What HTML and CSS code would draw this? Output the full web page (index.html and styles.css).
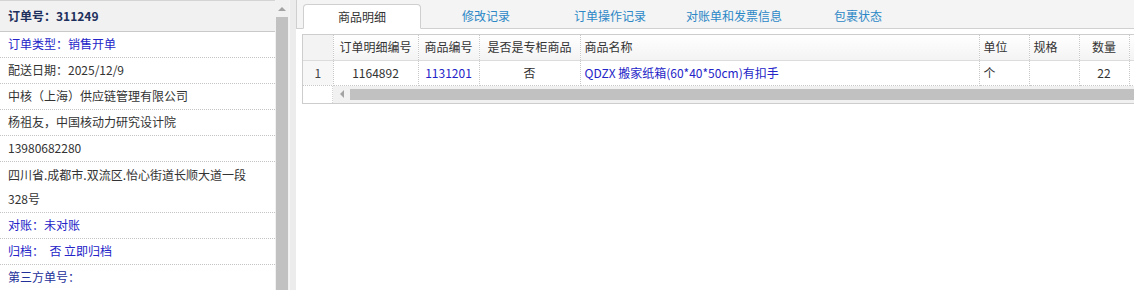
FILE: index.html
```html
<!DOCTYPE html>
<html lang="zh-CN">
<head>
<meta charset="utf-8">
<title>订单详情</title>
<link rel="stylesheet" href="styles.css">
</head>
<body>
<div class="page">
  <aside class="side">
    <div class="side-list">
      <div class="side-head">订单号：311249</div>
      <div class="row blue">订单类型：销售开单</div>
      <div class="row">配送日期：2025/12/9</div>
      <div class="row">中核（上海）供应链管理有限公司</div>
      <div class="row">杨祖友，中国核动力研究设计院</div>
      <div class="row">13980682280</div>
      <div class="row wrap">四川省.成都市.双流区.怡心街道长顺大道一段<br>328号</div>
      <div class="row blue">对账：未对账</div>
      <div class="row blue">归档：&nbsp; 否 立即归档</div>
      <div class="row blue dark">第三方单号：</div>
    </div>
    <div class="vscroll">
      <div class="vs-arrow"></div>
      <div class="vs-thumb"></div>
    </div>
  </aside>
  <div class="splitter"></div>
  <main class="main">
    <div class="tabs">
      <div class="tab active">商品明细</div>
      <div class="tab">修改记录</div>
      <div class="tab">订单操作记录</div>
      <div class="tab">对账单和发票信息</div>
      <div class="tab">包裹状态</div>
    </div>
    <div class="panel">
      <div class="grid">
        <table class="tbl">
          <colgroup>
            <col class="c-num"><col class="c-id"><col class="c-code"><col class="c-flag"><col class="c-name"><col class="c-unit"><col class="c-spec"><col class="c-qty"><col class="c-more">
          </colgroup>
          <thead>
            <tr>
              <th class="num"></th>
              <th>订单明细编号</th>
              <th>商品编号</th>
              <th>是否是专柜商品</th>
              <th class="left">商品名称</th>
              <th class="left">单位</th>
              <th class="left">规格</th>
              <th>数量</th>
              <th></th>
            </tr>
          </thead>
          <tbody>
            <tr>
              <td class="num">1</td>
              <td>1164892</td>
              <td class="link">1131201</td>
              <td>否</td>
              <td class="left link">QDZX 搬家纸箱(60*40*50cm)有扣手</td>
              <td class="left">个</td>
              <td class="left"></td>
              <td>22</td>
              <td></td>
            </tr>
          </tbody>
        </table>
        <div class="hs-row">
          <div class="hs-corner"></div>
          <div class="hscroll">
            <div class="hs-arrow"></div>
            <div class="hs-thumb"></div>
          </div>
        </div>
      </div>
    </div>
  </main>
</div>
</body>
</html>
```

FILE: styles.css
```css
* { box-sizing: border-box; }

html, body {
  margin: 0;
  padding: 0;
  background: #fff;
}

body {
  font-family: "Noto Sans CJK SC", "Microsoft YaHei", sans-serif;
  font-size: 12px;
  color: #333;
}

.page {
  display: flex;
  width: 1134px;
  height: 290px;
  overflow: hidden;
}

/* ---------- left side ---------- */
.side {
  display: flex;
  width: 289px;
  flex: none;
  height: 290px;
  overflow: hidden;
}

.side-list {
  width: 275px;
  flex: none;
}

.side-head {
  height: 32px;
  line-height: 29px;
  padding: 0 0 1px 8px;
  background: #f1f1f1;
  border-top: 1px solid #d4d4d4;
  border-bottom: 1px solid #c9c9c9;
  font-weight: bold;
  color: #1d2f5c;
}

.row {
  line-height: 24px;
  padding: 0 0 1px 8px;
  border-bottom: 1px dotted #c4c4c4;
  color: #333;
  white-space: nowrap;
}

.row.wrap { padding-top: 1px; }

.row.blue { color: #2424c8; }
.row.dark { color: #22309a; }

.vscroll {
  width: 14px;
  flex: none;
  background: #f1f1f1;
  display: flex;
  flex-direction: column;
  align-items: center;
}

.vs-arrow {
  height: 17px;
  width: 14px;
  display: flex;
  align-items: center;
  justify-content: center;
}

.vs-arrow::before {
  content: "";
  border-left: 4px solid transparent;
  border-right: 4px solid transparent;
  border-bottom: 4px solid #a3a3a3;
}

.vs-thumb {
  flex: 1;
  width: 12px;
  background: #c1c1c1;
}

.splitter {
  width: 7px;
  flex: none;
  background: #ececec;
  border-left: 1px solid #f4f4f4;
}

/* ---------- main ---------- */
.main {
  flex: 1;
  min-width: 0;
  overflow: hidden;
  background: #fff;
}

.tabs {
  display: flex;
  align-items: flex-end;
  gap: 6px;
  height: 29px;
  padding-left: 6px;
  background: #f4f4f4;
  border-left: 1px solid #cfcfcf;
  border-bottom: 1px solid #d0d0d0;
}

.tab {
  width: 118px;
  flex: none;
  height: 24px;
  line-height: 22px;
  text-align: center;
  color: #2b87c6;
  margin-bottom: -1px;
}

.tab.active {
  height: 25px;
  line-height: 23px;
  background: #fff;
  color: #333;
  border: 1px solid #cfcfcf;
  border-bottom: 1px solid #fff;
  border-radius: 4px 4px 0 0;
}

.panel {
  padding: 5px 0 0 6px;
}

.grid {
  width: 900px;
  border-left: 1px solid #cdcdcd;
  border-top: 1px solid #cdcdcd;
  border-bottom: 1px solid #cdcdcd;
}

.tbl {
  border-collapse: collapse;
  table-layout: fixed;
  width: 899px;
}

.c-num { width: 30px; }
.c-id { width: 85px; }
.c-code { width: 61px; }
.c-flag { width: 101px; }
.c-name { width: 399px; }
.c-unit { width: 50px; }
.c-spec { width: 50px; }
.c-qty { width: 50px; }
.c-more { width: 73px; }

.tbl th,
.tbl td {
  padding: 0 4px 1px;
  height: 25px;
  font-weight: normal;
  text-align: center;
  white-space: nowrap;
  overflow: hidden;
  border-right: 1px dotted #c8c8c8;
}

.tbl th {
  background: linear-gradient(#ffffff, #f3f3f3);
  border-bottom: 1px solid #dcdcdc;
  color: #333;
}

.tbl td {
  border-bottom: 1px dotted #c8c8c8;
  color: #333;
}

.tbl .left { text-align: left; }

.tbl .num {
  background: #f3f3f3;
  color: #444;
}

.tbl td.num { background: #f7f7f7; }

.tbl .link { color: #2424c8; }

.hs-row {
  display: flex;
  height: 17px;
}

.hs-corner {
  width: 30px;
  flex: none;
  background: #fff;
  border-right: 1px dotted #d4d4d4;
}

.hscroll {
  flex: 1;
  display: flex;
  align-items: center;
  background: #f1f1f1;
}

.hs-arrow {
  width: 17px;
  height: 17px;
  flex: none;
  display: flex;
  align-items: center;
  justify-content: center;
}

.hs-arrow::before {
  content: "";
  border-top: 4px solid transparent;
  border-bottom: 4px solid transparent;
  border-right: 4px solid #a3a3a3;
}

.hs-thumb {
  flex: 1;
  height: 11px;
  background: #c1c1c1;
}
```
